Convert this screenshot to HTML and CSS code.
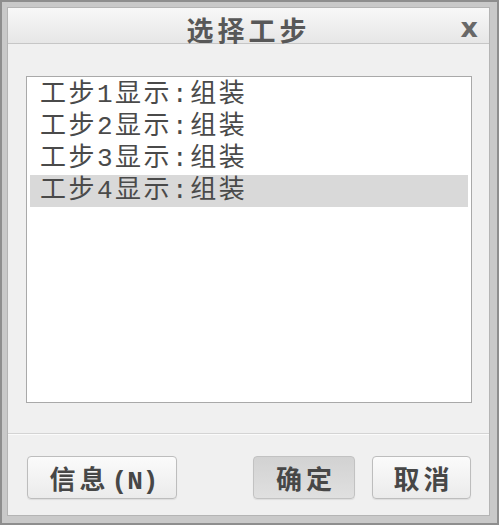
FILE: index.html
```html
<!DOCTYPE html>
<html>
<head>
<meta charset="utf-8">
<title>选择工步</title>
<link rel="stylesheet" href="styles.css">
</head>
<body>
  <div class="frame">
    <div class="window">
      <div class="titlebar">
        <span></span>
        <span class="title">选择工步</span>
        <span class="close">x</span>
      </div>

      <div class="steplist">
        <div class="row">工步1显示:组装</div>
        <div class="row">工步2显示:组装</div>
        <div class="row">工步3显示:组装</div>
        <div class="row selected">工步4显示:组装</div>
      </div>

      <div class="separator"></div>

      <div class="footer">
        <button class="btn btn-info">信息<span class="key">(N)</span></button>
        <button class="btn btn-ok">确定</button>
        <button class="btn btn-cancel">取消</button>
      </div>
    </div>
  </div>
</body>
</html>
```

FILE: styles.css
```css
/** DIALOG FRAME **/
body {
  margin: 0;
  background: #c9c9c9;
}

.frame {
  width: 499px;
  height: 525px;
  box-sizing: border-box;
  border: 2px solid #8e8e8e;
  background: #c9c9c9;
  padding: 5px 7px 7px 5px;
}

.window {
  height: 100%;
  box-sizing: border-box;
  border: 1px solid #b4b4b4;
  background: #f0f0f0;
  display: flex;
  flex-direction: column;
}

/** TITLE **/
.titlebar {
  height: 35px;
  border-bottom: 1px solid #c6c6c6;
  background: linear-gradient(#f8f8f8, #e6e6e6);
  display: grid;
  grid-template-columns: 1fr auto 1fr;
  align-items: center;
}

.title {
  font-family: "Noto Sans CJK SC", sans-serif;
  font-size: 27px;
  font-weight: bold;
  color: #585858;
  letter-spacing: 4px;
  padding-left: 0;
  padding-top: 2px;
}

.close {
  justify-self: end;
  margin-right: 11px;
  font-family: "DejaVu Sans", sans-serif;
  font-size: 27px;
  font-weight: bold;
  color: #686868;
  line-height: 1;
  padding-bottom: 3px;
}

/** LIST **/
.steplist {
  margin: 32px 17px 0 18px;
  height: 327px;
  box-sizing: border-box;
  border: 1px solid #a9a9a9;
  background: #fff;
  padding: 2px 3px;
}

.row {
  height: 32px;
  line-height: 32px;
  padding-left: 10px;
  font-family: "Liberation Mono", "Noto Sans CJK SC", monospace;
  font-size: 26px;
  letter-spacing: 2.5px;
  color: #4a4a4a;
  white-space: nowrap;
}

.row.selected {
  background: #d9d9d9;
}

/** BUTTONS **/
.separator {
  margin-top: 30px;
  height: 1px;
  background: #d4d4d4;
  border-bottom: 1px solid #fbfbfb;
}

.footer {
  display: flex;
  padding: 21px 18px 0 19px;
}

.btn {
  height: 43px;
  box-sizing: border-box;
  border: 1px solid #bdbdbd;
  border-radius: 4px;
  background: linear-gradient(#fbfbfb, #ebebeb);
  box-shadow: 0 1px 1px rgba(0,0,0,0.08);
  font-family: "Liberation Mono", "Noto Sans CJK SC", monospace;
  font-size: 26px;
  font-weight: bold;
  color: #474747;
  letter-spacing: 4px;
  padding: 0 0 0 4px;
}

.key {
  letter-spacing: 0;
  padding-left: 2px;
}

.btn-info { width: 150px; }

.btn-ok {
  width: 102px;
  margin-left: auto;
  background: linear-gradient(#d2d2d2, #e0e0e0);
  border-color: #c2c2c2;
}

.btn-cancel {
  width: 99px;
  margin-left: 17px;
}
```
